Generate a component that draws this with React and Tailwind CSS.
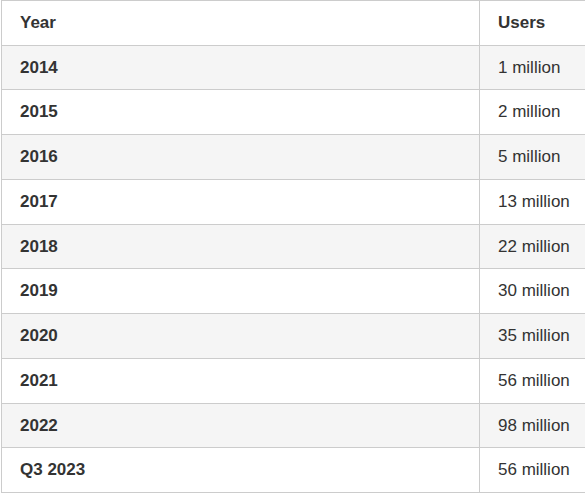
import React from 'react';

const rows = [
  ['2014', '1 million'],
  ['2015', '2 million'],
  ['2016', '5 million'],
  ['2017', '13 million'],
  ['2018', '22 million'],
  ['2019', '30 million'],
  ['2020', '35 million'],
  ['2021', '56 million'],
  ['2022', '98 million'],
  ['Q3 2023', '56 million'],
];

const App = () => {
  return (
    <div className="w-[585px] h-[496px] overflow-hidden bg-white" style={{ fontFamily: '"Liberation Sans", Arial, sans-serif' }}>
      <table className="ml-px w-[640px] table-fixed border-collapse text-[17px] leading-[23.73px] text-[#333]">
        <thead>
          <tr className="bg-white">
            <th className="w-[478px] border border-[#cccccc] px-[18px] py-[10px] text-left font-bold">Year</th>
            <th className="border border-[#cccccc] px-[18px] py-[10px] text-left font-bold">Users</th>
          </tr>
        </thead>
        <tbody>
          {rows.map(([year, users], i) => (
            <tr key={year} className={i % 2 === 0 ? 'bg-[#f5f5f5]' : 'bg-white'}>
              <td className="border border-[#cccccc] px-[18px] py-[10px] font-bold">{year}</td>
              <td className="border border-[#cccccc] px-[18px] py-[10px]">{users}</td>
            </tr>
          ))}
        </tbody>
      </table>
    </div>
  );
};

export default App;
